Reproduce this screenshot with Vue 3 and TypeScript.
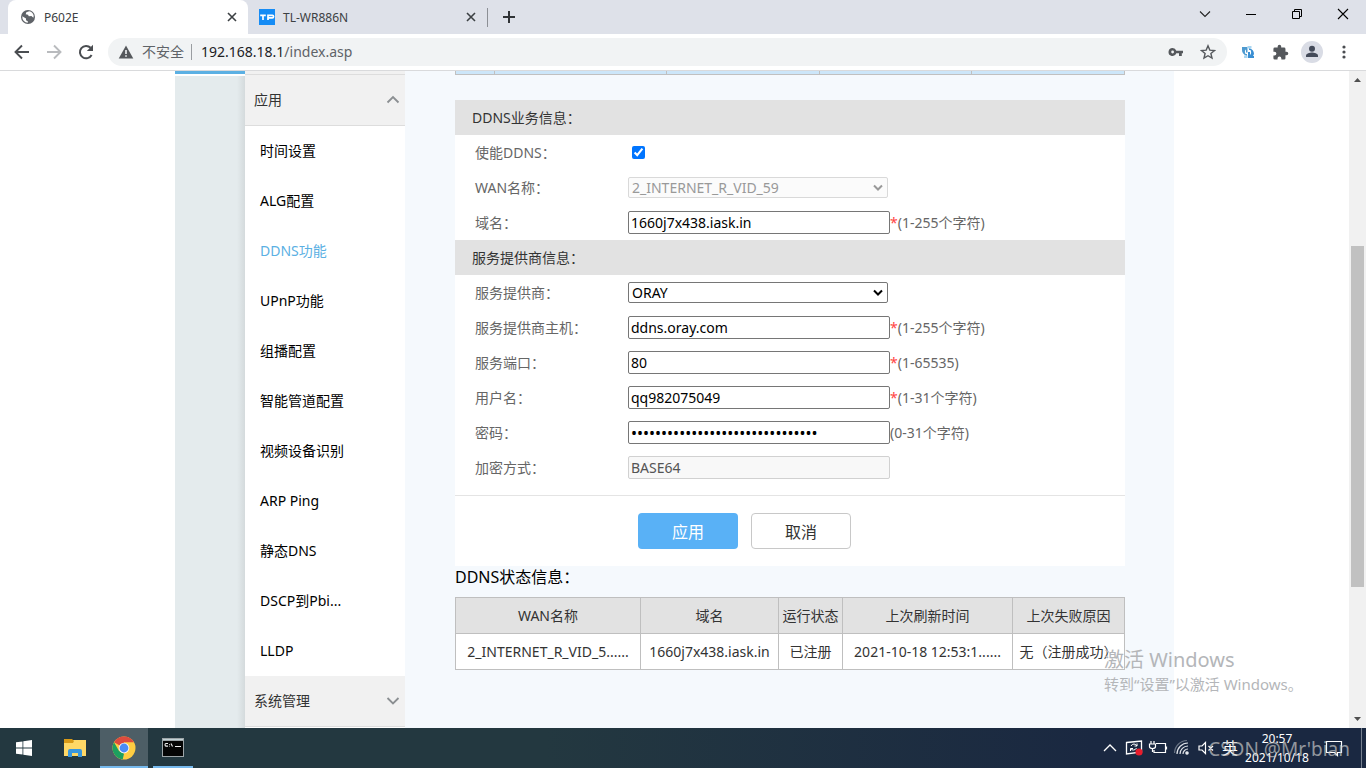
<script setup lang="ts">
import { ref } from 'vue'

interface Field {
  id: string
  label: string
  kind: 'check' | 'select' | 'text' | 'password'
  value: string
  hint?: string
  required?: boolean
  disabled?: boolean
}

const menu: string[] = [
  '时间设置', 'ALG配置', 'DDNS功能', 'UPnP功能', '组播配置', '智能管道配置',
  '视频设备识别', 'ARP Ping', '静态DNS', 'DSCP到Pbi...', 'LLDP',
]
const active = ref('DDNS功能')

const groups = ref<{ title: string; fields: Field[] }[]>([
  {
    title: 'DDNS业务信息：',
    fields: [
      { id: 'enable', label: '使能DDNS：', kind: 'check', value: '' },
      { id: 'wan', label: 'WAN名称：', kind: 'select', value: '2_INTERNET_R_VID_59', disabled: true },
      { id: 'domain', label: '域名：', kind: 'text', value: '1660j7x438.iask.in', hint: '(1-255个字符)', required: true },
    ],
  },
  {
    title: '服务提供商信息：',
    fields: [
      { id: 'provider', label: '服务提供商：', kind: 'select', value: 'ORAY' },
      { id: 'host', label: '服务提供商主机：', kind: 'text', value: 'ddns.oray.com', hint: '(1-255个字符)', required: true },
      { id: 'port', label: '服务端口：', kind: 'text', value: '80', hint: '(1-65535)', required: true },
      { id: 'user', label: '用户名：', kind: 'text', value: 'qq982075049', hint: '(1-31个字符)', required: true },
      { id: 'pass', label: '密码：', kind: 'password', value: 'x'.repeat(31), hint: '(0-31个字符)' },
      { id: 'method', label: '加密方式：', kind: 'text', value: 'BASE64', disabled: true },
    ],
  },
])

const heads: string[] = ['WAN名称', '域名', '运行状态', '上次刷新时间', '上次失败原因']
const cells: string[] = ['2_INTERNET_R_VID_5......', '1660j7x438.iask.in', '已注册', '2021-10-18 12:53:1......', '无（注册成功）']
</script>

<template>
  <div class="desktop">
    <header class="tabs">
      <div class="tab current">
        <svg class="fav" viewBox="0 0 16 16"><circle cx="8" cy="8" r="7" fill="#5f6368" /><path d="M2.3 7.2 6 9.4v1.8l1.8 1v1.6A6 6 0 0 1 2.3 7.2zM6.3 3.2l3-.9a6 6 0 0 1 4.4 4.4l-.3 2-2-1.6-2.6.2-.8-1.5-2.3-.6z" fill="#fff" /></svg>
        <span class="title">P602E</span>
        <button class="icon" aria-label="关闭"><svg width="16" height="16" viewBox="0 0 16 16"><path d="M4 4l8 8M12 4l-8 8" stroke="#3c4043" stroke-width="1.6" /></svg></button>
      </div>
      <div class="tab">
        <svg class="fav" viewBox="0 0 16 16"><rect width="16" height="16" fill="#168cf5" /><path d="M1.2 6.300h5.600M4 6.300v4.700M9 11V6.300h4.500q1 0 1 1v.5q0 1-1 1H9" fill="none" stroke="#fff" stroke-width="1.700" /></svg>
        <span class="title">TL-WR886N</span>
        <button class="icon" aria-label="关闭"><svg width="16" height="16" viewBox="0 0 16 16"><path d="M4 4l8 8M12 4l-8 8" stroke="#3c4043" stroke-width="1.6" /></svg></button>
      </div>
      <button class="plus" aria-label="新标签页"><svg width="16" height="16" viewBox="0 0 16 16"><path d="M8 2v12M2 8h12" stroke="#303336" stroke-width="2" /></svg></button>
      <div class="window">
        <button aria-label="搜索标签页"><svg width="12" height="12" viewBox="0 0 12 12"><path d="M1 3.5l5 5 5-5" fill="none" stroke="#222" stroke-width="1.1" /></svg></button>
        <button aria-label="最小化"><svg width="12" height="12" viewBox="0 0 12 12"><path d="M1 6.5h10" stroke="#000" /></svg></button>
        <button aria-label="还原"><svg width="12" height="12" viewBox="0 0 12 12"><path d="M1.5 3.5h7v7h-7zM3.5 3.5v-2h7v7h-2" fill="none" stroke="#000" /></svg></button>
        <button aria-label="关闭窗口"><svg width="12" height="12" viewBox="0 0 12 12"><path d="M1 1l10 10M11 1L1 11" stroke="#000" stroke-width="1.1" /></svg></button>
      </div>
    </header>

    <nav class="toolbar">
      <button class="tool" aria-label="后退"><svg width="18" height="18" viewBox="0 0 18 18"><path d="M16 9H3M9 2.5 2.5 9 9 15.5" fill="none" stroke="#4a4d51" stroke-width="1.9" /></svg></button>
      <button class="tool" aria-label="前进"><svg width="18" height="18" viewBox="0 0 18 18"><path d="M2 9h13M9 2.5 15.5 9 9 15.5" fill="none" stroke="#b9bbbe" stroke-width="1.9" /></svg></button>
      <button class="tool" aria-label="刷新"><svg width="18" height="18" viewBox="0 0 18 18"><path d="M14.6 12A6.2 6.2 0 1 1 13.6 4.8" fill="none" stroke="#4a4d51" stroke-width="2" /><path d="M16 1.8V8H9.800z" fill="#4a4d51" /></svg></button>
      <div class="omnibox">
        <svg width="16" height="16" viewBox="0 0 16 16"><path d="M8 1.5 15.3 14.5H.7z" fill="#55585c" /><path d="M8 6v4M8 11.3v1.5" stroke="#f1f3f4" stroke-width="1.6" /></svg>
        <span class="unsafe">不安全</span>
        <span class="url">192.168.18.1<i>/index.asp</i></span>
        <button class="icon" aria-label="密码"><svg width="16" height="16" viewBox="0 0 16 16"><path fill-rule="evenodd" d="M4.600 4a4 4 0 1 0 3.700 5.300H11V12h2.800V9.300H15V6.700H8.300A4 4 0 0 0 4.600 4zm0 2.600a1.400 1.400 0 1 1 0 2.800 1.400 1.400 0 0 1 0-2.800z" fill="#55585c" /></svg></button>
        <button class="icon" aria-label="收藏"><svg width="16" height="16" viewBox="0 0 16 16"><path d="M8 1.8l1.8 4.3 4.7.4-3.6 3 1.1 4.6L8 11.7l-4 2.4 1.1-4.6-3.6-3 4.7-.4z" fill="none" stroke="#55585c" stroke-width="1.4" /></svg></button>
      </div>
      <button class="tool" aria-label="扩展"><svg width="14" height="14" viewBox="0 0 14 14"><path d="M1 2h5.500v5.500H5V4.500Q3 6 4.500 9H6v2Q1 9 1 5z" fill="#4d9ad0" /><path d="M13 13H7V7h2v3q2-2 .5-5H8V3q5 1.500 5 6l-1 2h1z" fill="#3a8fd3" /><path d="M6.500 1h4v2.500h-4zM3 10.500h3.500V13H3z" fill="#a8d5f1" /></svg></button>
      <button class="tool" aria-label="扩展程序"><svg width="17" height="17" viewBox="0 0 24 24"><path d="M20.500 11H19V7a2 2 0 0 0-2-2h-4V3.500a2.500 2.500 0 0 0-5 0V5H4a2 2 0 0 0-2 2v3.800h1.500a2.700 2.700 0 0 1 0 5.400H2V20a2 2 0 0 0 2 2h3.800v-1.500a2.700 2.700 0 0 1 5.400 0V22H17a2 2 0 0 0 2-2v-4h1.500a2.500 2.500 0 0 0 0-5z" fill="#55585c" /></svg></button>
      <button class="tool" aria-label="用户"><svg width="22" height="22" viewBox="0 0 22 22"><circle cx="11" cy="11" r="11" fill="#d9dce5" /><circle cx="11" cy="7.700" r="3" fill="#434a59" /><path d="M5 16v-1.500c0-2 4-3 6-3s6 1 6 3V16z" fill="#434a59" /></svg></button>
      <button class="tool" aria-label="菜单"><svg width="16" height="16" viewBox="0 0 16 16" fill="#4a4d51"><circle cx="8" cy="3" r="1.600" /><circle cx="8" cy="8" r="1.600" /><circle cx="8" cy="13" r="1.600" /></svg></button>
    </nav>

    <div class="viewport">
      <div class="canvas">
        <div class="site">
          <div class="rail"></div>
          <aside class="side">
            <div class="edge"></div>
            <button class="group">应用<svg width="14" height="14" viewBox="0 0 14 14"><path d="M1.500 9.500 7 4l5.500 5.500" fill="none" stroke="#8b8f92" stroke-width="1.800" /></svg></button>
            <a v-for="m in menu" :key="m" href="#" :class="{ on: m === active }" @click.prevent="active = m">{{ m }}</a>
            <button class="group">系统管理<svg width="14" height="14" viewBox="0 0 14 14"><path d="M1.500 4 7 9.500 12.500 4" fill="none" stroke="#8b8f92" stroke-width="1.800" /></svg></button>
          </aside>
          <main>
            <div class="strip"><b v-for="n in 5" :key="n"></b></div>
            <form @submit.prevent>
              <template v-for="g in groups" :key="g.title">
                <h2>{{ g.title }}</h2>
                <div v-for="f in g.fields" :key="f.id" class="row">
                  <label :for="f.id">{{ f.label }}</label>
                  <input v-if="f.kind === 'check'" :id="f.id" type="checkbox" checked />
                  <span v-else-if="f.kind === 'select'" class="pick" :class="{ off: f.disabled }">
                    <select :id="f.id" v-model="f.value" :disabled="f.disabled"><option>{{ f.value }}</option></select>
                    <svg width="10" height="8" viewBox="0 0 10 8"><path d="M1 1.500l4 4 4-4" fill="none" stroke="currentColor" stroke-width="2" /></svg>
                  </span>
                  <input v-else :id="f.id" v-model="f.value" :type="f.kind" class="box" :disabled="f.disabled" />
                  <span v-if="f.hint" class="hint"><em v-if="f.required">*</em>{{ f.hint }}</span>
                </div>
              </template>
              <div class="actions">
                <button class="ok" type="submit">应用</button>
                <button class="no" type="button">取消</button>
              </div>
            </form>
            <h3>DDNS状态信息：</h3>
            <table>
              <colgroup><col class="c1" /><col class="c2" /><col class="c3" /><col class="c4" /><col class="c5" /></colgroup>
              <thead><tr><th v-for="h in heads" :key="h">{{ h }}</th></tr></thead>
              <tbody><tr><td v-for="c in cells" :key="c">{{ c }}</td></tr></tbody>
            </table>
          </main>
        </div>
      </div>
      <div class="scroll">
        <svg width="17" height="17" viewBox="0 0 17 17"><path d="M5 11h7L8.500 7z" fill="#505050" /></svg>
        <div class="track"><div class="thumb"></div></div>
        <svg width="17" height="17" viewBox="0 0 17 17"><path d="M5 6h7l-3.500 4z" fill="#505050" /></svg>
      </div>
      <div class="activate"><strong>激活 Windows</strong><span>转到“设置”以激活 Windows。</span></div>
    </div>

    <footer class="taskbar">
      <button class="app" aria-label="开始"><svg width="16" height="16" viewBox="0 0 16 16" fill="#fff"><path d="M0 2.300 6.500 1.400v6.200H0zM7.300 1.300 16 0v7.600H7.300zM0 8.400h6.500v6.200L0 13.700zM7.300 8.400H16V16l-8.700-1.300z" /></svg></button>
      <button class="app files" aria-label="文件资源管理器"><svg width="22" height="18" viewBox="0 0 22 18"><path d="M0 1h22v16H0z" fill="#ffd866" /><path d="M0 0h8l2 2-1 2H0z" fill="#d99a17" /><path d="M4 18v-6q0-2 2-2h10q2 0 2 2v6h-4v-4H8v4z" fill="#3a97dc" /></svg></button>
      <button class="app now" aria-label="Chrome"><svg width="24" height="24" viewBox="0 0 24 24"><circle cx="12" cy="12" r="11.500" fill="#ffcd42" /><path d="M12 12 2 6.300A11.500 11.500 0 0 1 22 6.300H12z" fill="#dd4b3e" /><path d="M2 6.300 7 15l5 2.700-1.300 5.700A11.500 11.500 0 0 1 2 6.300z" fill="#1da05f" /><circle cx="12" cy="12" r="5.300" fill="#f4f4f4" /><circle cx="12" cy="12" r="4.400" fill="#4b8bf4" /></svg></button>
      <button class="app open" aria-label="命令提示符"><svg width="22" height="19" viewBox="0 0 22 19"><rect width="22" height="19" fill="#9da5a8" /><rect x="1" y="3" width="20" height="15" fill="#050505" /><path d="M1 1.500h20" stroke="#c3d3d6" /><path d="M6 5.500H4q-1 0-1 1.300t1 1.300h2M7.500 6v.8M7.500 7.800v.7M9 5.500l1.500 3M13 8.500h6" fill="none" stroke="#eee" stroke-width="1.100" /></svg></button>
      <div class="tray">
        <svg width="24" height="20" viewBox="0 0 24 20"><path d="M6 13l6-6 6 6" fill="none" stroke="#fff" stroke-width="1.300" /></svg>
        <svg width="24" height="20" viewBox="0 0 24 20"><path d="M4.500 4.500 19.500 3v11l-15 2z" fill="none" stroke="#fff" stroke-width="1.300" /><path d="M9 8q1-2 3-2t3 2M14.500 10q-1 2-3 2T8.500 11M15 5.500V8h-2.500M8.500 13v-2.500H11" fill="none" stroke="#fff" /><circle cx="17" cy="14" r="3.600" fill="#e81c2c" /></svg>
        <svg width="24" height="20" viewBox="0 0 24 20"><path d="M10 5.500h9.500v9H8V12M20.500 8.500v3M5 3v3M8 3v3M3.500 6h6v2.500q0 2-3 2t-3-2zM6.500 10v4" fill="none" stroke="#fff" stroke-width="1.200" /></svg>
        <svg width="24" height="20" viewBox="0 0 24 20" fill="none" stroke="#dfe3e8" stroke-width="1.200"><path d="M7 16A11 11 0 0 1 18 5M10 16a8 8 0 0 1 8-8M13 16a5 5 0 0 1 5-5" /><path d="M4.500 15A13 13 0 0 1 17 2.500" opacity=".4" /><circle cx="17" cy="15" r="1.200" fill="#fff" /></svg>
        <svg width="24" height="20" viewBox="0 0 24 20"><path d="M5 8h3l3.500-3.500v11L8 12H5zM14.500 8l4.500 4.500M19 8l-4.500 4.500" fill="none" stroke="#fff" stroke-width="1.200" /></svg>
        <span class="ime">英</span>
        <time><span>20:57</span><span>2021/10/18</span></time>
        <svg class="note" width="24" height="20" viewBox="0 0 24 20"><path d="M4.500 3.500h15v11h-4v3l-3-3h-8z" fill="none" stroke="#fff" stroke-width="1.200" /></svg>
        <i class="peek"></i>
      </div>
      <div class="credit">CSDN @Mr'bian</div>
    </footer>
  </div>
</template>

<style>
body { margin: 0; overflow: hidden; }
</style>

<style scoped>
* { box-sizing: border-box; }
.desktop {
  display: flex; flex-direction: column; height: 100vh; overflow: hidden; background: #fff;
  font: 14px/20px "Noto Sans", "Noto Sans CJK SC", sans-serif; color: #333;
}
button { border: 0; padding: 0; background: none; font: inherit; color: inherit; display: flex; align-items: center; justify-content: center; }
svg { flex: none; display: block; }

.tabs { display: flex; height: 34px; flex: none; padding-left: 8px; background: #dee1e9; }
.tab { display: flex; align-items: center; width: 239px; padding: 0 8px 0 11px; font-size: 12px; line-height: 18px; color: #3c4043; }
.tab.current { width: 240px; padding-left: 12px; background: #fff; border-radius: 8px 8px 0 0; }
.fav { width: 16px; height: 16px; }
.title { flex: 1; margin-left: 8px; padding-top: 1px; }
.icon { width: 16px; height: 16px; }
.plus { width: 43px; position: relative; }
.plus::before { content: ""; position: absolute; left: 0; top: 8px; height: 19px; width: 1px; background: #8c8f95; }
.window { display: flex; margin-left: auto; height: 28px; }
.window button { width: 46px; }

.toolbar { display: flex; align-items: center; height: 37px; flex: none; padding: 0 6px; border-bottom: 1px solid #d9dadc; }
.tool { width: 32px; height: 32px; }
.omnibox { flex: 1; display: flex; align-items: center; height: 28px; margin: 0 5px 0 6px; padding: 0 11px 0 10px; border-radius: 14px; background: #f1f3f4; }
.unsafe { margin-left: 8px; padding-right: 7px; line-height: 16px; border-right: 1px solid #9a9da1; color: #5f6368; }
.url { flex: 1; margin-left: 9px; color: #202124; }
.url i { font-style: normal; color: #5f6368; }
.omnibox .icon + .icon { margin-left: 16px; }

.viewport { flex: 1; min-height: 0; display: flex; position: relative; }
.canvas { flex: 1; min-width: 0; overflow: hidden; }
.site { display: grid; grid-template-columns: 70px 160px 1fr; max-width: 999px; min-height: 100%; margin: 0 auto; }
.rail { border-top: 3px solid #5bb0e3; background: linear-gradient(#fff 2px, transparent 2px), linear-gradient(90deg, #e4ebed 62px, #d4dadc); }
.side { background: #fff; }
.side a { display: block; height: 50px; padding-left: 15px; line-height: 50px; color: #000; text-decoration: none; }
.side a.on { color: #5bb0e3; }
.edge { height: 4px; background: #f1f1f1; border-bottom: 1px solid #ddd; }
.group { width: 100%; height: 51px; padding: 0 5px 0 9px; justify-content: space-between; background: #f1f1f1; border-bottom: 1px solid #ddd; }

main { padding: 0 49px 0 50px; background: #f5f9fd; }
.strip { display: grid; grid-template-columns: 39fr 172fr 153fr 152fr 153fr; height: 4px; margin-bottom: 25px; border: solid #c0c0c0; border-width: 0 1px 1px 0; background: #cce6f9; }
.strip b { border-left: 1px solid #c0c0c0; }
form { background: #fff; }
h2 { margin: 0; padding-left: 17px; font-size: 14px; font-weight: 400; line-height: 35px; background: #e2e2e2; }
.row { display: flex; align-items: center; height: 35px; color: #666; }
.row label { width: 173px; padding-left: 20px; }
.row input[type="checkbox"] { width: 13px; height: 13px; margin: 0 0 0 4px; accent-color: #0075ff; }
.box { width: 262px; height: 23px; padding: 0 2px; border: 1px solid #767676; border-radius: 2px; background: #fff; color: #000; font: inherit; line-height: 20px; }
.box[type="password"] { font-size: 16px; }
.box:disabled { border-color: #d1d1d1; background: #f8f8f8; color: #545454; }
.pick { position: relative; width: 260px; height: 21px; color: #000; }
.pick select { display: block; width: 100%; height: 100%; padding: 0 3px; appearance: none; border: 1px solid #767676; border-radius: 2px; background: #fff; color: inherit; font: inherit; line-height: 18px; opacity: 1; }
.pick svg { position: absolute; right: 5px; top: 7px; pointer-events: none; }
.pick.off { color: #999; }
.pick.off select { border-color: #d9d9d9; background: #fbfbfb; }
.hint em { font-style: normal; color: #f44; }
.actions { display: flex; justify-content: center; gap: 13px; height: 71px; margin-top: 10px; padding: 17px 91px 0 0; border-top: 1px solid #e4e4e4; }
.actions button { flex: none; width: 100px; height: 36px; padding-top: 2px; border-radius: 4px; font-size: 16px; }
.actions .ok { background: #59b1f6; color: #fff; }
.actions .no { border: 1px solid #c8c8c8; background: #fff; }
h3 { margin: 0; padding-bottom: 9px; font-size: 16px; font-weight: 400; line-height: 22px; color: #000; }
table { width: 100%; table-layout: fixed; border-collapse: collapse; background: #fff; text-align: center; }
th, td { height: 36px; padding: 0; border: 1px solid #bfbfbf; font-weight: 400; white-space: nowrap; }
th { background: #e2e2e2; }
.c1 { width: 185px; }
.c2 { width: 138px; }
.c3 { width: 64px; }
.c4 { width: 170px; }

.scroll { display: flex; flex-direction: column; width: 17px; background: #f1f1f1; }
.track { flex: 1; display: grid; grid-template-rows: 158fr 341fr 124fr; padding: 0 2px; }
.thumb { grid-row: 2; background: #c1c1c1; }
.activate { position: absolute; right: 57px; bottom: 32px; width: 205px; color: #b4b6b9; white-space: nowrap; pointer-events: none; }
.activate strong { display: block; font-size: 20px; font-weight: 400; line-height: 24px; }
.activate span { display: block; font-size: 15px; line-height: 24px; }

.taskbar { position: relative; display: flex; height: 40px; flex: none; background: linear-gradient(90deg, #233840 40%, #1a2841 80%); color: #fff; }
.app { width: 48px; height: 40px; padding-top: 2px; border-bottom: 2px solid transparent; }
.files { margin-left: 3px; }
.app.now { margin-left: 1px; background: #4d5e66; border-color: #76b9ed; }
.app.open { width: 40px; margin-left: 5px; padding-top: 0; border-color: #76b9ed; }
.tray { display: flex; align-items: center; margin-left: auto; }
.ime { width: 24px; text-align: center; font-size: 16px; }
time { display: flex; flex-direction: column; width: 70px; text-align: center; font-size: 12px; line-height: 19px; }
.note { margin: 0 15px 0 10px; }
.peek { width: 5px; height: 40px; border-left: 1px solid #76808f; }
.credit { position: absolute; right: 16px; bottom: 6px; font-size: 19px; line-height: 26px; color: rgba(200, 200, 200, .7); pointer-events: none; }
</style>
